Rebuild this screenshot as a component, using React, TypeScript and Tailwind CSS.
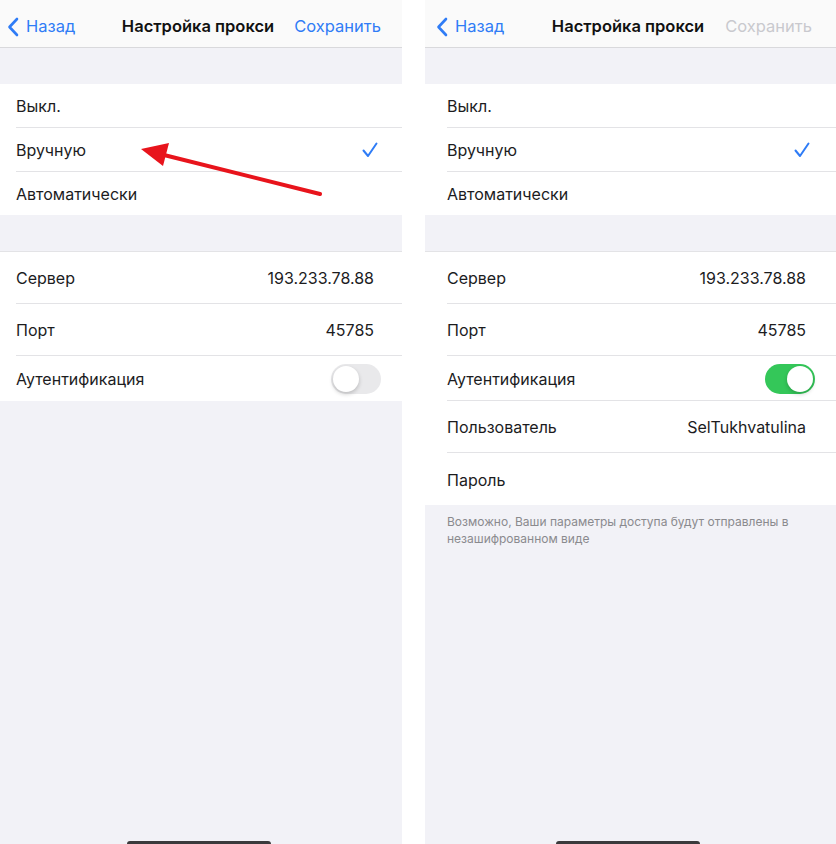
const font = { fontFamily: 'Inter, "Noto Sans", sans-serif' };

type Row = { label: string; value?: string; h: string; last?: boolean; check?: boolean; toggle?: 'on' | 'off' };

function Chevron() {
    return (
        <svg width="12" height="20" viewBox="0 0 12 20" className="shrink-0">
            <path d="M10 2 L2.5 10 L10 18" fill="none" stroke="#2f7cf6" strokeWidth="2.6" strokeLinecap="round" strokeLinejoin="round" />
        </svg>
    );
}

function Check() {
    return (
        <svg width="16" height="16" viewBox="0 0 16 16">
            <path d="M1.5 8.5 L6 14 L14.5 1.5" fill="none" stroke="#2f7cf6" strokeWidth="2" strokeLinecap="round" strokeLinejoin="round" />
        </svg>
    );
}

function Toggle({ on }: { on: boolean }) {
    return (
        <div className={on
            ? "w-[50px] h-[30px] rounded-full bg-[#34c759] flex items-center justify-end p-[2px]"
            : "w-[50px] h-[30px] rounded-full bg-[#e9e9eb] flex items-center justify-start p-[2px]"}>
            <div className="w-[26px] h-[26px] rounded-full bg-white shadow-[0_2px_4px_rgba(0,0,0,0.2)]"></div>
        </div>
    );
}

function Section({ rows, pl, pr }: { rows: Row[]; pl: string; pr: string }) {
    return (
        <div className={`bg-white ${pl}`}>
            {rows.map((r, i) => (
                <div key={i} className={`${r.h} flex items-center justify-between pt-[1px] ${r.toggle ? 'pr-[21px]' : pr} ${r.last ? '' : 'border-b border-[#e3e3e6]'}`}>
                    <span className="text-[16px] text-[#1c1c1e]">{r.label}</span>
                    {r.value && <span className="text-[16px] text-[#1c1c1e]">{r.value}</span>}
                    {r.check && <Check />}
                    {r.toggle && <Toggle on={r.toggle === 'on'} />}
                </div>
            ))}
        </div>
    );
}

function Phone({ right }: { right?: boolean }) {
    const pl = right ? 'pl-[22px]' : 'pl-[16px]';
    const pr = right ? 'pr-[30px]' : 'pr-[28px]';
    const modes: Row[] = [
        { label: 'Выкл.', h: 'h-[44px]' },
        { label: 'Вручную', h: 'h-[44px]', check: true },
        { label: 'Автоматически', h: 'h-[43px]', last: true },
    ];
    const fields: Row[] = [
        { label: 'Сервер', value: '193.233.78.88', h: 'h-[52px]' },
        { label: 'Порт', value: '45785', h: 'h-[52px]' },
        { label: 'Аутентификация', h: 'h-[45px]', toggle: right ? 'on' : 'off', last: !right },
    ];
    if (right) {
        fields.push({ label: 'Пользователь', value: 'SelTukhvatulina', h: 'h-[52px]' });
        fields.push({ label: 'Пароль', h: 'h-[52px]', last: true });
    }
    return (
        <div className={`relative h-[844px] flex flex-col bg-[#f2f2f7] ${right ? 'w-[411px]' : 'w-[402px]'}`} style={font}>
            <div className={`h-[48px] pt-[6px] bg-[#fafafa] border-b border-[#d9d9dc] flex items-center justify-between ${right ? 'pl-[11px] pr-[24px]' : 'pl-[7px] pr-[21px]'}`}>
                <div className="flex items-center gap-[7px] w-[100px]">
                    <Chevron />
                    <span className="text-[16.5px] text-[#2f7cf6]">Назад</span>
                </div>
                <span className="text-[16.5px] font-semibold text-[#111] ml-[8px]">Настройка прокси</span>
                <span className={`w-[100px] text-right text-[16.5px] ${right ? 'text-[#c9c9ce]' : 'text-[#2f7cf6]'}`}>Сохранить</span>
            </div>
            <div className="h-[36px]"></div>
            <Section rows={modes} pl={pl} pr={right ? 'pr-[26px]' : 'pr-[24px]'} />
            <div className="h-[37px] border-b border-[#e3e3e6]"></div>
            <Section rows={fields} pl={pl} pr={pr} />
            {right && (
                <p className="pl-[22px] pr-[20px] pt-[8px] text-[12px] leading-[17px] text-[#8a8a8e]">
                    Возможно, Ваши параметры доступа будут отправлены в незашифрованном виде
                </p>
            )}
            <div className="mt-auto flex justify-center">
                <div className={`h-[3px] w-[144px] rounded-t-full bg-[#3a3a3c] ${right ? 'ml-[-6px]' : 'ml-[-4px]'}`}></div>
            </div>
            {!right && (
                <svg className="absolute left-0 top-0 pointer-events-none" width="402" height="844">
                    <line x1="320" y1="194" x2="160" y2="154" stroke="#e8141c" strokeWidth="4" strokeLinecap="round" />
                    <polygon points="141,149 169,143 163,166" fill="#e8141c" />
                </svg>
            )}
        </div>
    );
}

export default function App() {
    return (
        <div className="w-[836px] h-[844px] bg-white flex justify-between overflow-hidden">
            <Phone />
            <Phone right />
        </div>
    );
}
